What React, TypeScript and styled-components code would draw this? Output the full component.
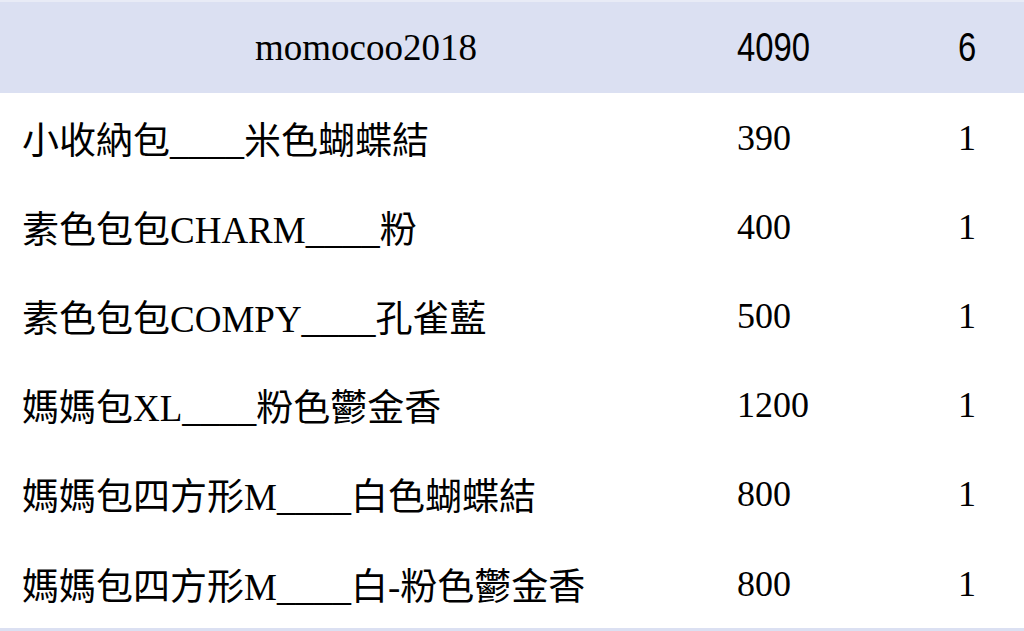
import React from "react";
import styled, { createGlobalStyle } from "styled-components";

const GlobalStyle = createGlobalStyle`
  html, body {
    margin: 0;
    padding: 0;
    background: #ffffff;
  }
  body {
    font-family: "Liberation Serif", "Noto Sans CJK TC", serif;
    color: #000000;
  }
`;

const Table = styled.div`
  width: 1024px;
  border-top: 2px solid #e8ebf6;
  border-bottom: 4px solid #dbe0f2;
`;

const Row = styled.div<{ $head?: boolean }>`
  display: grid;
  grid-template-columns: 732px 178px 114px;
  align-items: center;
  height: ${(p) => (p.$head ? "91px" : "89.2px")};
  background: ${(p) => (p.$head ? "#dbe0f2" : "#ffffff")};
`;

const NameCell = styled.div<{ $head?: boolean }>`
  font-size: ${(p) => (p.$head ? "37px" : "37px")};
  text-align: ${(p) => (p.$head ? "center" : "left")};
  padding-left: ${(p) => (p.$head ? "0" : "22px")};
  white-space: nowrap;
`;

const PriceCell = styled.div`
  padding-left: 5px;
  font-size: 36px;
`;

const QtyCell = styled.div`
  text-align: center;
  font-size: 36px;
`;

/* header totals are set in a narrow sans face */
const HeadNum = styled.span<{ $origin: string }>`
  display: inline-block;
  font-family: "Liberation Sans", sans-serif;
  font-size: 40px;
  transform: scaleX(0.82);
  transform-origin: ${(p) => p.$origin};
`;

const items = [
  { name: "小收納包____米色蝴蝶結", price: 390, qty: 1 },
  { name: "素色包包CHARM____粉", price: 400, qty: 1 },
  { name: "素色包包COMPY____孔雀藍", price: 500, qty: 1 },
  { name: "媽媽包XL____粉色鬱金香", price: 1200, qty: 1 },
  { name: "媽媽包四方形M____白色蝴蝶結", price: 800, qty: 1 },
  { name: "媽媽包四方形M____白-粉色鬱金香", price: 800, qty: 1 },
];

const App: React.FC = () => {
  return (
    <>
      <GlobalStyle />
      <Table>
        <Row $head>
          <NameCell $head>momocoo2018</NameCell>
          <PriceCell>
            <HeadNum $origin="left center">4090</HeadNum>
          </PriceCell>
          <QtyCell>
            <HeadNum $origin="center">6</HeadNum>
          </QtyCell>
        </Row>
        {items.map((item, i) => (
          <Row key={i}>
            <NameCell>{item.name}</NameCell>
            <PriceCell>{item.price}</PriceCell>
            <QtyCell>{item.qty}</QtyCell>
          </Row>
        ))}
      </Table>
    </>
  );
};

export default App;
